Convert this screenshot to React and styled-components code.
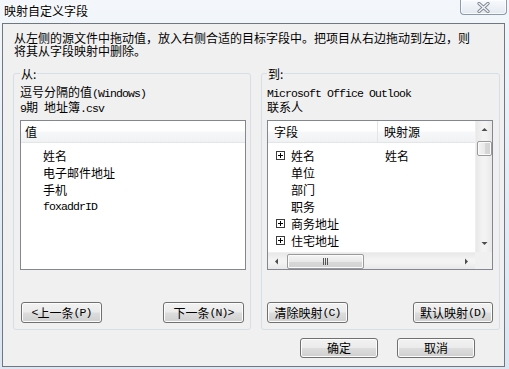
import React from "react";
import styled, { createGlobalStyle } from "styled-components";

const GlobalStyle = createGlobalStyle`
  html, body {
    margin: 0;
    padding: 0;
  }
  body {
    width: 509px;
    height: 369px;
    overflow: hidden;
    background: #dfe8f2;
    font-family: "Noto Sans CJK SC", "Liberation Sans", sans-serif;
    font-size: 12px;
    color: #000;
  }
`;

const Window = styled.div`
  width: 509px;
  height: 369px;
  display: flex;
  flex-direction: column;
  background: linear-gradient(180deg, #f3f7fb 0%, #e6eef7 40%, #dbe6f2 100%);
`;

const TitleBar = styled.div`
  height: 23px;
  flex: none;
  display: flex;
  justify-content: space-between;
  align-items: flex-start;
  padding: 0 2px 0 4px;
`;

const Title = styled.div`
  margin-top: 5px;
  line-height: 12px;
  font-size: 12px;
  text-shadow: 0 0 6px #fff, 0 0 3px #fff;
`;

const CloseButton = styled.div`
  width: 45px;
  height: 14px;
  display: flex;
  align-items: center;
  justify-content: center;
  border: 1px solid #8d9aab;
  border-top: none;
  border-radius: 0 0 4px 4px;
  background: linear-gradient(180deg, #f7f9fc 0%, #eef2f7 50%, #e3e9f1 100%);
  box-shadow: inset 0 0 0 1px rgba(255, 255, 255, 0.7);
`;

const Client = styled.div`
  flex: 1;
  margin: 0 4px 2px 2px;
  border: 1px solid #6f7780;
  background: #f0f0f0;
  padding: 7px 4px 0 10px;
  display: flex;
  flex-direction: column;
`;

const Intro = styled.div`
  margin-left: 1px;
  font-size: 12px;
  line-height: 13px;
  white-space: nowrap;
`;

const Panels = styled.div`
  margin-top: 10px;
  display: grid;
  grid-template-columns: 238px 239px;
  column-gap: 10px;
`;

const GroupBox = styled.fieldset`
  margin: 0;
  min-width: 0;
  border: 1px solid #d5dfe5;
  border-radius: 3px;
  padding: 4px ${(p) => p.$right}px 6px ${(p) => p.$left}px;
  display: flex;
  flex-direction: column;
`;

const Legend = styled.legend`
  padding: 0 1px;
  font-size: 12px;
  line-height: 13px;
`;

const InfoLine = styled.div`
  line-height: 15px;
  height: 15px;
  white-space: nowrap;
`;

const Mono = styled.span`
  font-family: "Liberation Mono", "DejaVu Sans Mono", monospace;
  font-size: 11.5px;
  letter-spacing: -0.9px;
`;

const ListBox = styled.div`
  margin-top: 6px;
  height: 150px;
  box-sizing: border-box;
  border: 1px solid #828790;
  background: #fff;
  overflow: hidden;
  display: ${(p) => (p.$grid ? "grid" : "flex")};
  flex-direction: column;
  grid-template-columns: 1fr 17px;
  grid-template-rows: 1fr 17px;
`;

const ListMain = styled.div`
  display: flex;
  flex-direction: column;
  overflow: hidden;
  min-height: 0;
`;

const Header = styled.div`
  height: 21px;
  flex: none;
  display: grid;
  grid-template-columns: ${(p) => p.$cols};
  border-bottom: 1px solid #e3e5e8;
  background: linear-gradient(180deg, #ffffff 0%, #ffffff 45%, #f6f7f9 55%, #f1f2f4 100%);
`;

const HeaderCell = styled.div`
  padding-left: ${(p) => p.$pad}px;
  line-height: 21px;
  border-right: ${(p) => (p.$divider ? "1px solid #e3e5e8" : "none")};
`;

const Rows = styled.div`
  padding-top: 4px;
  display: flex;
  flex-direction: column;
`;

const Row = styled.div`
  height: 17px;
  flex: none;
  display: grid;
  grid-template-columns: ${(p) => p.$cols};
  align-items: center;
  line-height: 17px;
  white-space: nowrap;
`;

const Cell = styled.div`
  display: flex;
  align-items: center;
  padding-left: ${(p) => p.$pad}px;
  gap: 6px;
`;

const ExpanderSlot = styled.span`
  width: 9px;
  height: 9px;
  flex: none;
  display: flex;
`;

const VScroll = styled.div`
  display: flex;
  flex-direction: column;
  align-items: center;
  background: linear-gradient(90deg, #e8e8e8 0%, #f3f3f3 40%, #f3f3f3 60%, #e8e8e8 100%);
  border-left: 1px solid #efefef;
`;

const HScroll = styled.div`
  display: flex;
  align-items: center;
  background: linear-gradient(180deg, #e8e8e8 0%, #f3f3f3 40%, #f3f3f3 60%, #e8e8e8 100%);
  border-top: 1px solid #efefef;
`;

const Corner = styled.div`
  background: #f0f0f0;
`;

const Arrow = styled.div`
  width: ${(p) => (p.$h ? "17px" : "16px")};
  height: ${(p) => (p.$h ? "16px" : "17px")};
  flex: none;
  display: flex;
  align-items: center;
  justify-content: center;
`;

const VThumb = styled.div`
  margin-top: 3px;
  width: 13px;
  height: 13px;
  border: 1px solid #9a9a9a;
  border-radius: 2px;
  background: linear-gradient(90deg, #f4f4f4 0%, #e9e9e9 50%, #d8d8d8 51%, #d2d2d2 100%);
  box-shadow: inset 0 0 0 1px #fbfbfb;
`;

const Track = styled.div`
  flex: 1;
`;

const HThumb = styled.div`
  margin-left: 2px;
  width: 75px;
  height: 13px;
  border: 1px solid #9a9a9a;
  border-radius: 2px;
  background: linear-gradient(180deg, #f4f4f4 0%, #e9e9e9 50%, #d8d8d8 51%, #d2d2d2 100%);
  box-shadow: inset 0 0 0 1px #fbfbfb;
  display: flex;
  align-items: center;
  justify-content: center;
`;

const ButtonRow = styled.div`
  margin-top: 32px;
  display: flex;
  justify-content: space-between;
  padding: 0 ${(p) => p.$r}px 0 ${(p) => p.$l}px;
`;

const Button = styled.div`
  width: ${(p) => p.$w}px;
  height: ${(p) => p.$h}px;
  box-sizing: border-box;
  border: 1px solid #707070;
  border-radius: 3px;
  background: linear-gradient(180deg, #f2f2f2 0%, #ebebeb 48%, #dddddd 52%, #cfcfcf 100%);
  box-shadow: inset 0 0 0 1px #fcfcfc;
  display: flex;
  align-items: center;
  justify-content: center;
  line-height: 12px;
  white-space: nowrap;
`;

const DialogButtons = styled.div`
  margin-top: 8px;
  display: flex;
  justify-content: flex-end;
  gap: 19px;
  padding-right: 25px;
`;

const Expander = () => (
  <svg width="9" height="9" viewBox="0 0 9 9">
    <rect x="0.5" y="0.5" width="8" height="8" fill="#fff" stroke="#3c3c3c" />
    <path d="M2 4.5h5M4.5 2v5" stroke="#000" strokeWidth="1" />
  </svg>
);

const Tri = ({ dir }) => {
  const d = {
    up: "M0.5 4L3.5 1L6.5 4Z",
    down: "M0.5 1L3.5 4L6.5 1Z",
    left: "M4 0.5L1 3.5L4 6.5Z",
    right: "M1 0.5L4 3.5L1 6.5Z",
  }[dir];
  const vertical = dir === "up" || dir === "down";
  return (
    <svg width={vertical ? 7 : 5} height={vertical ? 5 : 7} viewBox={vertical ? "0 0 7 5" : "0 0 5 7"}>
      <path d={d} fill="#4d4d4d" />
    </svg>
  );
};

const Grip = () => (
  <svg width="7" height="7" viewBox="0 0 7 7">
    <path d="M1.5 0v7M3.5 0v7M5.5 0v7" stroke="#555" strokeWidth="1" />
  </svg>
);

const CloseGlyph = () => (
  <svg width="13" height="11" viewBox="0 0 13 11">
    <path d="M2 1.5L11 9.5M11 1.5L2 9.5" stroke="#7d8590" strokeWidth="3.2" strokeLinecap="round" />
    <path d="M2 1.5L11 9.5M11 1.5L2 9.5" stroke="#f4f6f9" strokeWidth="1.4" strokeLinecap="round" />
  </svg>
);

const sourceItems = ["姓名", "电子邮件地址", "手机", "foxaddrID"];

const targetItems = [
  { name: "姓名", expand: true, mapped: "姓名" },
  { name: "单位" },
  { name: "部门" },
  { name: "职务" },
  { name: "商务地址", expand: true },
  { name: "住宅地址", expand: true },
  { name: "其他地址", expand: true },
];

const App = () => {
  return (
    <>
      <GlobalStyle />
      <Window>
        <TitleBar>
          <Title>映射自定义字段</Title>
          <CloseButton>
            <CloseGlyph />
          </CloseButton>
        </TitleBar>
        <Client>
          <Intro>
            从左侧的源文件中拖动值，放入右侧合适的目标字段中。把项目从右边拖动到左边，则
            <br />
            将其从字段映射中删除。
          </Intro>
          <Panels>
            <GroupBox $left={6} $right={4}>
              <Legend>从:</Legend>
              <InfoLine>
                逗号分隔的值<Mono>(Windows)</Mono>
              </InfoLine>
              <InfoLine>
                <Mono>9</Mono>期<Mono> </Mono>地址簿<Mono>.csv</Mono>
              </InfoLine>
              <ListBox>
                <Header $cols="1fr">
                  <HeaderCell $pad={4}>值</HeaderCell>
                </Header>
                <Rows>
                  {sourceItems.map((item) => (
                    <Row key={item} $cols="1fr">
                      <Cell $pad={22}>
                        {/^[a-zA-Z]/.test(item) ? <Mono>{item}</Mono> : item}
                      </Cell>
                    </Row>
                  ))}
                </Rows>
              </ListBox>
              <ButtonRow $l={1} $r={2}>
                <Button $w={81} $h={21}>
                  <Mono>&lt;</Mono>上一条<Mono>(P)</Mono>
                </Button>
                <Button $w={81} $h={21}>
                  下一条<Mono>(N)&gt;</Mono>
                </Button>
              </ButtonRow>
            </GroupBox>
            <GroupBox $left={5} $right={6}>
              <Legend>到:</Legend>
              <InfoLine>
                <Mono>Microsoft Office Outlook</Mono>
              </InfoLine>
              <InfoLine>联系人</InfoLine>
              <ListBox $grid>
                <ListMain>
                  <Header $cols="110px 1fr">
                    <HeaderCell $pad={6} $divider>
                      字段
                    </HeaderCell>
                    <HeaderCell $pad={6}>映射源</HeaderCell>
                  </Header>
                  <Rows>
                    {targetItems.map((item) => (
                      <Row key={item.name} $cols="110px 1fr">
                        <Cell $pad={8}>
                          <ExpanderSlot>{item.expand && <Expander />}</ExpanderSlot>
                          {item.name}
                        </Cell>
                        <Cell $pad={7}>{item.mapped}</Cell>
                      </Row>
                    ))}
                  </Rows>
                </ListMain>
                <VScroll>
                  <Arrow>
                    <Tri dir="up" />
                  </Arrow>
                  <VThumb />
                  <Track />
                  <Arrow>
                    <Tri dir="down" />
                  </Arrow>
                </VScroll>
                <HScroll>
                  <Arrow $h>
                    <Tri dir="left" />
                  </Arrow>
                  <HThumb>
                    <Grip />
                  </HThumb>
                  <Track />
                  <Arrow $h>
                    <Tri dir="right" />
                  </Arrow>
                </HScroll>
                <Corner />
              </ListBox>
              <ButtonRow $l={0} $r={0}>
                <Button $w={81} $h={21}>
                  清除映射<Mono>(C)</Mono>
                </Button>
                <Button $w={80} $h={21}>
                  默认映射<Mono>(D)</Mono>
                </Button>
              </ButtonRow>
            </GroupBox>
          </Panels>
          <DialogButtons>
            <Button $w={78} $h={20}>
              确定
            </Button>
            <Button $w={78} $h={20}>
              取消
            </Button>
          </DialogButtons>
        </Client>
      </Window>
    </>
  );
};

export default App;
